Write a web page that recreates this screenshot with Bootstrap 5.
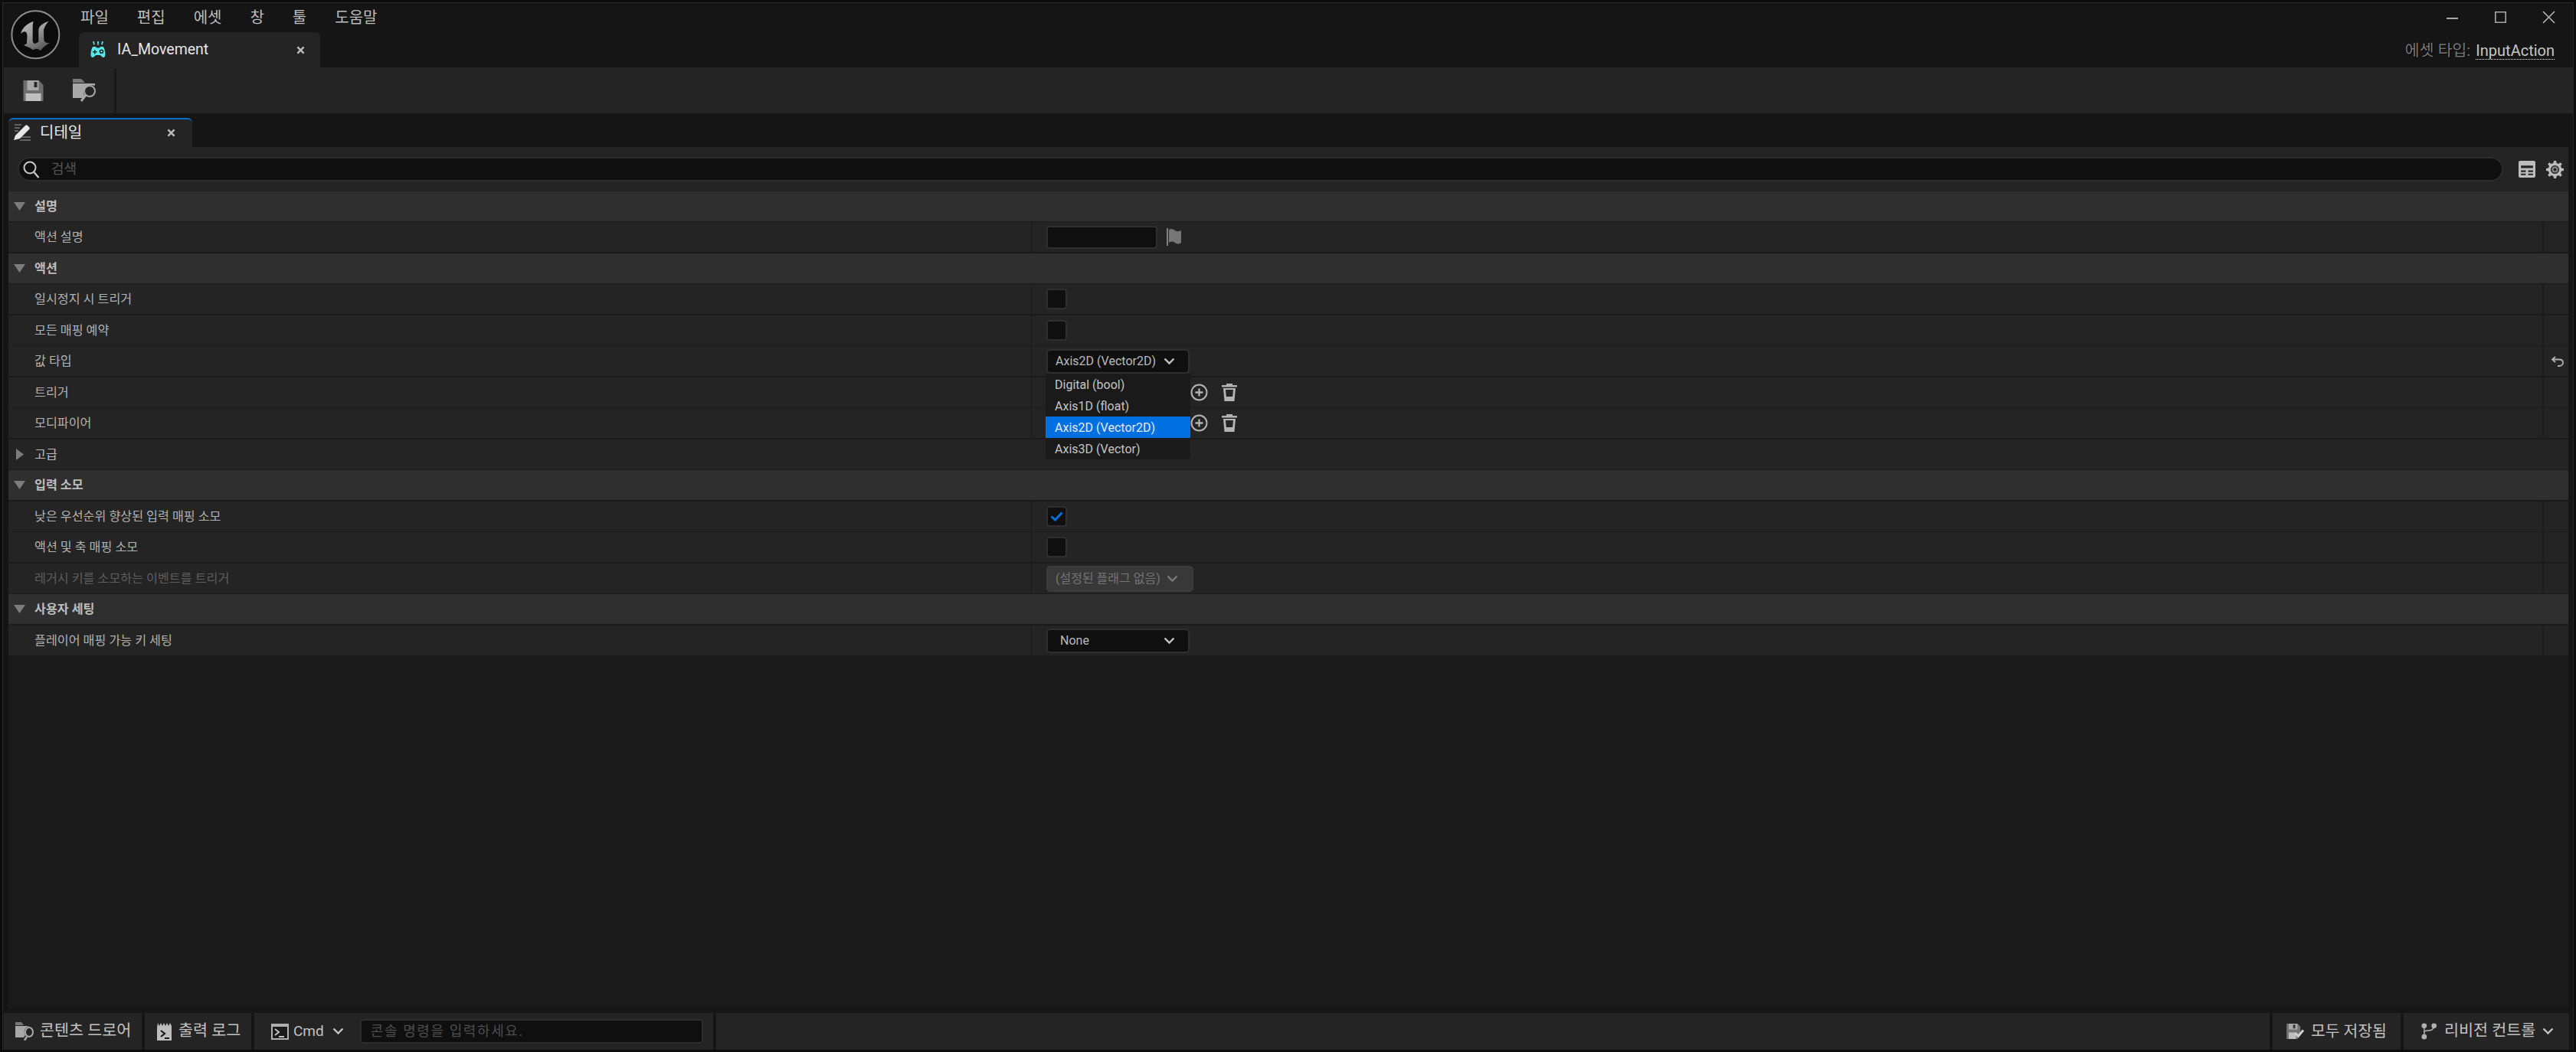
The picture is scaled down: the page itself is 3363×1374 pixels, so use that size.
<!DOCTYPE html>
<html lang="ko">
<head>
<meta charset="utf-8">
<title>IA_Movement</title>
<link href="https://cdn.jsdelivr.net/npm/bootstrap@5.3.0/dist/css/bootstrap.min.css" rel="stylesheet">
<style>
html,body{height:100%;margin:0;background:#0c0c0c;overflow:hidden}
body{font-family:Roboto,"Noto Sans CJK KR",sans-serif;font-size:14px;color:#c0c0c0}
.ue-win{height:1374px;width:3363px;display:flex;flex-direction:column;padding:3px 3px 3px 3px}
.ue-frame{flex:1 1 auto;display:flex;flex-direction:column;background:#151515;border:1px solid #2a2a2a;border-bottom:0;border-right-color:#242424;min-height:0}
.ue-title{height:84px;flex:none;position:relative}
.ue-logo{width:65px;height:65px;margin:9px 24px 0 10px;flex:none}
.ue-menu{height:38px;padding-left:2px}
.ue-menu span{font-size:20px;color:#bdbdbd;margin-right:37px;line-height:36px}
.ue-doc{width:315px;height:46px;background:#242424;border-radius:6px 6px 0 0;padding-left:15px;color:#e6e6e6;font-size:19.5px}
.ue-doctxt{margin-left:15px;width:234px}
.ue-wbtns{padding-top:10px;gap:47.5px;padding-right:23px}
.ue-asset{padding-right:24px;margin-top:20px;font-size:20px;color:#777;text-shadow:1px 1px 0 #000}
.ue-asset-k{font-size:20.500px}
.ue-asset b{font-weight:400;color:#c6c6c6;border-bottom:1px dotted #eee;line-height:22px;margin-left:7px;display:inline-block;text-shadow:none}
.ue-tool{height:60px;flex:none;background:#242424;margin-left:1px;padding-left:25px;position:relative}
.ue-folder{margin-left:38px}
.ue-sep{position:absolute;left:144px;top:2px;bottom:1px;width:3px;background:#181818}
.ue-strip{height:44px;flex:none;padding:6px 0 0 7px}
.ue-dtab{width:240px;height:38px;background:#242424;border-top:2px solid #0a6ec8;border-radius:6px 6px 0 0;padding:0 22px 2px 7px;color:#e8e8e8;font-size:20px}
.ue-dtxt{margin-left:11px}
.ue-panel{flex:1 1 auto;margin:0 6px 6px 7px;background:#1a1a1a;min-height:0;display:flex;flex-direction:column}
.ue-search{height:58px;flex:none;background:#242424;padding:13px 6px 0 12px}
.ue-sbox{flex:1 1 auto;height:32px;background:#0f0f0f;border:2px solid #2c2c2c;border-radius:16px;padding-left:5px;color:#555;font-size:18px}
.ue-sbox span{margin-left:15px;margin-bottom:2px}
.ue-ric{margin-left:20px;gap:14px;height:32px}
.ue-r{height:39px;flex:none;background:#242424;margin-bottom:1px;position:relative}
.ue-g2{margin-bottom:2px}
.ue-h{background:#2f2f2f}
.ue-h .ue-n{font-weight:700;color:#c8c8c8}
.ue-n{width:1336px;flex:none;height:100%;padding:1px 0 0 34px;border-right:1px solid #1a1a1a;color:#b2b2b2;font-size:16.2px;position:relative}
.ue-h .ue-n,.ue-adv .ue-n{border-right:0;color:#bdbdbd}
.ue-dis .ue-n{color:#5e5e5e}
.ue-v{flex:1 1 auto;height:100%;padding-left:19px;position:relative}
.ue-e{width:34px;flex:none;height:100%;border-left:2px solid #1c1c1c;position:relative}
.ue-arr{position:absolute;left:7px;top:14px}
.ue-arr2{position:absolute;left:10px;top:12px}
.ue-reset{position:absolute;left:9px;top:13px}
.ue-flag{margin-left:12px}
.ue-text{width:145px;height:30px;background:#0f0f0f;border:2px solid #2f2f2f;border-radius:4px}
.ue-check{width:27px;height:27px;background:#0f0f0f;border:2px solid #2f2f2f;border-radius:4px}
.ue-combo{width:187px;height:32px;background:#0f0f0f;border:2px solid #2f2f2f;border-radius:5px;padding:0 17px 0 10px;color:#bababa;font-size:16px}
.ue-combo.ue-none{padding-left:16px}
.ue-combo.ue-off{width:192px;height:34px;background:#383838;border-color:#3c3c3c;color:#757575;font-size:16px;padding-right:18px}
.dropdown-menu.ue-drop{position:absolute;left:18px;top:36px;width:189px;min-width:0;height:112px;margin:0;padding:0;background:#1a1a1a;border:0;border-radius:0 0 4px 4px;z-index:5;font-size:16px}
.ue-drop .dropdown-item{height:28px;line-height:29px;padding:0 0 0 12px;color:#c4c4c4}
.ue-drop .dropdown-item.active{background:#0070e0;color:#e8e8e8}
.ue-acts{position:absolute;left:207px;top:0;height:39px;gap:17px}
.ue-foot{height:48px;flex:none;margin:0 5px 0 1px;position:relative}
.ue-fs{height:48px;background:#242424;flex:none;color:#c2c2c2;font-size:20.7px}
.ue-s1{width:180px;padding-left:15px}
.ue-s2{width:139px;padding-left:16px}
.ue-s3{width:599px;padding-left:22px}
.ue-s4{flex:1 1 auto}
.ue-s5{width:167px;padding-left:18px;font-size:20.4px}
.ue-s6{width:216px;padding-left:23px}
.ue-m7{margin-left:7px}
.ue-m6{margin-left:6px}
.ue-m8{margin-left:8px}
.ue-m9{margin-left:9px}
.ue-m10{margin-left:10px}
.ue-m11{margin-left:11px}
.ue-cmd{font-size:19px}
.ue-in{width:448px;height:32px;background:#0f0f0f;border:2px solid #2c2c2c;border-radius:4px;margin-left:21px;padding:0 0 2px 12px;color:#4e4e4e;font-size:18px;letter-spacing:1.6px}
</style>
</head>
<body>
<div class="ue-win"><div class="ue-frame">

<div class="ue-title d-flex">
  <svg class="ue-logo" viewBox="42 40 193 195">
    <defs><linearGradient id="ug" x1="0" y1="0" x2="0.6" y2="1"><stop offset="0" stop-color="#bdbdbd"/><stop offset=".5" stop-color="#9a9a9a"/><stop offset="1" stop-color="#5a5a5a"/></linearGradient></defs>
    <circle cx="138" cy="137" r="93" fill="#0c0c0c" stroke="#8c8c8c" stroke-width="6"/>
    <path fill="url(#ug)" d="M130 84C108 92 86 108 80 134C90 122 100 122 104 132C108 145 103 160 104 172L92 178C105 184 118 188 128 197C138 190 150 190 158 200C163 190 178 178 196 168C184 172 172 168 171 155L170 118C174 104 182 92 190 84C170 90 152 100 150 118L150 165L137 172C131 172 127 166 127 160L127 118C127 104 127 94 130 84Z"/>
  </svg>
  <div class="d-flex flex-column flex-grow-1">
    <div class="ue-menu d-flex align-items-center"><span>파일</span><span>편집</span><span>에셋</span><span>창</span><span>툴</span><span>도움말</span></div>
    <div class="ue-doc d-flex align-items-center">
      <svg width="20" height="22" viewBox="0 0 20 22" fill="#57e6ea"><path d="M3 0l2 .3.8 4-1.500.3zM9 0h2l-.4 5h-1.200zM15 0l2 .3-1.300 4.300-1.500-.3z"/><path fill-rule="evenodd" d="M4 7h3l1 1.500h4L13 7h3c2 0 3 5 3.500 9 .3 3-1 5-2.500 5-2 0-3-3-4.500-3h-5C6 18 5 21 3 21c-1.500 0-3-2-2.500-5C1 12 2 7 4 7zm10.500 3.500a2.800 2.800 0 100 5.600 2.800 2.800 0 000-5.600zM5 11v2H3v1.500h2v2h1.500v-2h2V13h-2v-2z"/><circle cx="14.500" cy="13.300" r="1.200"/></svg>
      <span class="ue-doctxt">IA_Movement</span>
      <svg width="11" height="11" viewBox="0 0 12 12" stroke="#bdbdbd" stroke-width="2.600"><path d="M1.500 1.500l9 9M10.500 1.500l-9 9"/></svg>
    </div>
  </div>
  <div class="d-flex flex-column align-items-end">
    <div class="ue-wbtns d-flex align-items-center">
      <svg width="15" height="15" viewBox="0 0 15 15" stroke="#a8a8a8" stroke-width="2" fill="none"><path d="M0 9h15"/></svg>
      <svg width="15" height="15" viewBox="0 0 15 15" stroke="#a8a8a8" stroke-width="1.600" fill="none"><path d="M.8.800h13.400v13.400H.8z"/></svg>
      <svg width="17" height="17" viewBox="0 0 17 17" stroke="#b4b4b4" stroke-width="1.600" fill="none"><path d="M1 1l15 15M16 1L1 16"/></svg>
    </div>
    <div class="ue-asset d-flex align-items-center"><span class="ue-asset-k">에셋 타입:</span><b>InputAction</b></div>
  </div>
</div>

<div class="ue-tool d-flex align-items-center">
  <svg width="27" height="27" viewBox="0 0 26 27" fill="#a8a8a8"><path d="M0 0h20l6 6v21H0z" fill="#6e6e6e"/><path d="M5 0h15v13H5z"/><path d="M14 2h4v7h-4z" fill="#2a2a2a"/><path d="M3 17h20v10H3z" fill="#c0c0c0"/></svg>
  <svg class="ue-folder" width="30" height="30" viewBox="0 0 30 30" fill="#a8a8a8"><path d="M0 0h11l5 5H0z" fill="#7a7a7a"/><path d="M0 6h29v3c-9-3-17 3-14 13l-2 3H0z"/><circle cx="22" cy="16" r="7" fill="none" stroke="#a8a8a8" stroke-width="2"/><path d="M17 21l-6 8" stroke="#a8a8a8" stroke-width="3"/></svg>
  <div class="ue-sep"></div>
</div>

<div class="ue-strip">
  <div class="ue-dtab d-flex align-items-center">
    <svg width="23" height="22" viewBox="0 0 23 22"><path d="M1 1h9M1 5h7M1 9h5M10 17h12M8 21h14" stroke="#777" stroke-width="1.500"/><path d="M0 21l2-6L15 2c1-1 2-1 3 0l2 2c1 1 1 2 0 3L8 19z" fill="#e8e8e8"/></svg>
    <span class="ue-dtxt flex-grow-1">디테일</span>
    <svg width="11" height="11" viewBox="0 0 12 12" stroke="#bdbdbd" stroke-width="2.600"><path d="M1.500 1.500l9 9M10.500 1.500l-9 9"/></svg>
  </div>
</div>

<div class="ue-panel">
  <div class="ue-search d-flex">
    <div class="ue-sbox d-flex align-items-center">
      <svg width="22" height="23" viewBox="0 0 22 23" fill="none" stroke="#c8c8c8" stroke-width="2"><circle cx="9" cy="9" r="7.500"/><path d="M14.500 15l6 7" stroke-width="2.300"/></svg>
      <span>검색</span>
    </div>
    <div class="ue-ric d-flex align-items-center">
      <svg width="22" height="22" viewBox="0 0 21 21"><rect width="21" height="21" rx="2" fill="#bdbdbd"/><path d="M3 6h15v3H3zM3 12h6v2H3zM12 12h6v2h-6zM3 16h6v2H3zM12 16h6v2h-6z" fill="#242424"/></svg>
      <svg width="23" height="23" viewBox="0 0 23 23"><path fill="#bdbdbd" fill-rule="evenodd" d="M10 0h3l.6 3 2.600 1 2.500-1.800 2.100 2.100L19 6.800l1 2.600 3 .6v3l-3 .6-1 2.600 1.800 2.500-2.100 2.100-2.500-1.800-2.600 1-.6 3h-3l-.6-3-2.600-1-2.500 1.800-2.100-2.100L4 16.200l-1-2.600-3-.6v-3l3-.6 1-2.600L2.200 4.300l2.100-2.100L6.800 4l2.600-1zM11.500 6a5.500 5.500 0 100 11 5.500 5.500 0 000-11z"/><circle cx="11.500" cy="11.500" r="3" fill="none" stroke="#8a8a8a" stroke-width="2"/></svg>
    </div>
  </div>

  <div class="ue-r ue-h d-flex align-items-center"><div class="ue-n d-flex align-items-center"><svg class="ue-arr" width="15" height="11" viewBox="0 0 15 11" fill="#7c7c7c"><path d="M0 0h15L7.500 11z"/></svg>설명</div></div>
  <div class="ue-r ue-g2 d-flex align-items-center"><div class="ue-n d-flex align-items-center">액션 설명</div>
    <div class="ue-v d-flex align-items-center"><div class="ue-text"></div>
      <svg class="ue-flag" width="20" height="23" viewBox="0 0 20 23"><path d="M1 0v23" stroke="#a0a0a0" stroke-width="1.500"/><path d="M3 2c3-2 5-1 8 1s5 1 8 0v16c-3 2-5 2-8 0s-5-2-8 0z" fill="#767676"/></svg>
    </div><div class="ue-e"></div></div>

  <div class="ue-r ue-h d-flex align-items-center"><div class="ue-n d-flex align-items-center"><svg class="ue-arr" width="15" height="11" viewBox="0 0 15 11" fill="#7c7c7c"><path d="M0 0h15L7.500 11z"/></svg>액션</div></div>
  <div class="ue-r ue-g2 d-flex align-items-center"><div class="ue-n d-flex align-items-center">일시정지 시 트리거</div><div class="ue-v d-flex align-items-center"><div class="ue-check"></div></div><div class="ue-e"></div></div>
  <div class="ue-r d-flex align-items-center"><div class="ue-n d-flex align-items-center">모든 매핑 예약</div><div class="ue-v d-flex align-items-center"><div class="ue-check"></div></div><div class="ue-e"></div></div>
  <div class="ue-r ue-g2 d-flex align-items-center"><div class="ue-n d-flex align-items-center">값 타입</div>
    <div class="ue-v d-flex align-items-center">
      <div class="ue-combo d-flex align-items-center justify-content-between"><span>Axis2D (Vector2D)</span><svg width="15" height="10" viewBox="0 0 15 10" fill="none" stroke="#c4c4c4" stroke-width="2.400"><path d="M1.500 1.500l6 6 6-6"/></svg></div>
      <div class="dropdown-menu show ue-drop">
        <a class="dropdown-item" href="#">Digital (bool)</a>
        <a class="dropdown-item" href="#">Axis1D (float)</a>
        <a class="dropdown-item active" href="#">Axis2D (Vector2D)</a>
        <a class="dropdown-item" href="#">Axis3D (Vector)</a>
      </div>
    </div>
    <div class="ue-e"><svg class="ue-reset" width="18" height="14" viewBox="0 0 18 14" fill="none" stroke="#b0b0b0" stroke-width="1.800"><path d="M6 1L2 4.500 6 8M2 4.500h9c3 0 5 1.500 5 4S14 13 11 13H9"/></svg></div>
  </div>
  <div class="ue-r d-flex align-items-center"><div class="ue-n d-flex align-items-center">트리거</div>
    <div class="ue-v"><div class="ue-acts d-flex align-items-center">
      <svg width="23" height="23" viewBox="0 0 23 23" fill="none" stroke="#b4b4b4" stroke-width="2"><circle cx="11.500" cy="11.500" r="10"/><path d="M11.500 6.500v10M6.500 11.500h10" stroke-width="2.300"/></svg>
      <svg width="22" height="23" viewBox="0 0 22 23" fill="#b4b4b4"><path d="M7 0h8v2h6v2.500H1V2h6z"/><path fill-rule="evenodd" d="M3 6h16l-1.500 17h-13zm3 2l1 10.500 1 1h6l1-1L16 8z"/><path d="M5.500 17h11v6h-11z"/></svg>
    </div></div><div class="ue-e"></div></div>
  <div class="ue-r ue-g2 d-flex align-items-center"><div class="ue-n d-flex align-items-center">모디파이어</div>
    <div class="ue-v"><div class="ue-acts d-flex align-items-center">
      <svg width="23" height="23" viewBox="0 0 23 23" fill="none" stroke="#b4b4b4" stroke-width="2"><circle cx="11.500" cy="11.500" r="10"/><path d="M11.500 6.500v10M6.500 11.500h10" stroke-width="2.300"/></svg>
      <svg width="22" height="23" viewBox="0 0 22 23" fill="#b4b4b4"><path d="M7 0h8v2h6v2.500H1V2h6z"/><path fill-rule="evenodd" d="M3 6h16l-1.500 17h-13zm3 2l1 10.500 1 1h6l1-1L16 8z"/><path d="M5.500 17h11v6h-11z"/></svg>
    </div></div><div class="ue-e"></div></div>
  <div class="ue-r ue-adv d-flex align-items-center"><div class="ue-n d-flex align-items-center"><svg class="ue-arr2" width="10" height="15" viewBox="0 0 10 15" fill="#7c7c7c"><path d="M0 0l10 7.500L0 15z"/></svg>고급</div></div>

  <div class="ue-r ue-h ue-g2 d-flex align-items-center"><div class="ue-n d-flex align-items-center"><svg class="ue-arr" width="15" height="11" viewBox="0 0 15 11" fill="#7c7c7c"><path d="M0 0h15L7.500 11z"/></svg>입력 소모</div></div>
  <div class="ue-r d-flex align-items-center"><div class="ue-n d-flex align-items-center">낮은 우선순위 향상된 입력 매핑 소모</div><div class="ue-v d-flex align-items-center"><div class="ue-check d-flex align-items-center justify-content-center"><svg width="17" height="13" viewBox="0 0 17 13" fill="none" stroke="#0a70dc" stroke-width="3"><path d="M1.500 6.500l5 4.500L15.500 1.500"/></svg></div></div><div class="ue-e"></div></div>
  <div class="ue-r ue-g2 d-flex align-items-center"><div class="ue-n d-flex align-items-center">액션 및 축 매핑 소모</div><div class="ue-v d-flex align-items-center"><div class="ue-check"></div></div><div class="ue-e"></div></div>
  <div class="ue-r ue-dis d-flex align-items-center"><div class="ue-n d-flex align-items-center">레거시 키를 소모하는 이벤트를 트리거</div>
    <div class="ue-v d-flex align-items-center"><div class="ue-combo ue-off d-flex align-items-center justify-content-between"><span>(설정된 플래그 없음)</span><svg width="15" height="10" viewBox="0 0 15 10" fill="none" stroke="#7a7a7a" stroke-width="2.400"><path d="M1.500 1.500l6 6 6-6"/></svg></div></div><div class="ue-e"></div></div>

  <div class="ue-r ue-h ue-g2 d-flex align-items-center"><div class="ue-n d-flex align-items-center"><svg class="ue-arr" width="15" height="11" viewBox="0 0 15 11" fill="#7c7c7c"><path d="M0 0h15L7.500 11z"/></svg>사용자 세팅</div></div>
  <div class="ue-r d-flex align-items-center"><div class="ue-n d-flex align-items-center">플레이어 매핑 가능 키 세팅</div>
    <div class="ue-v d-flex align-items-center"><div class="ue-combo ue-none d-flex align-items-center justify-content-between"><span>None</span><svg width="15" height="10" viewBox="0 0 15 10" fill="none" stroke="#c4c4c4" stroke-width="2.400"><path d="M1.500 1.500l6 6 6-6"/></svg></div></div><div class="ue-e"></div></div>
</div>

<div class="ue-foot d-flex gap-1">
  <div class="ue-fs ue-s1 d-flex align-items-center">
    <svg width="25" height="24" viewBox="0 0 25 24" fill="#a8a8a8"><path d="M0 0h8l3 4H0z" fill="#787878"/><path d="M0 5h19c-6 1-9 6-6 12l-2 3H0z"/><ellipse cx="18" cy="13" rx="5" ry="6" fill="none" stroke="#a8a8a8" stroke-width="2"/><path d="M15 19l-3 5" stroke="#a8a8a8" stroke-width="2.500"/></svg>
    <span class="ue-m7">콘텐츠 드로어</span>
  </div>
  <div class="ue-fs ue-s2 d-flex align-items-center">
    <svg width="20" height="23" viewBox="0 0 20 23"><path d="M0 6l1-6 2 4 2-4 2 4 2-4 2 4 2-4 2 4 2-4 2 4v19H0z" fill="#bdbdbd"/><path d="M5 10l5 4-5 4M10 20h6" fill="none" stroke="#1a1a1a" stroke-width="2.200"/></svg>
    <span class="ue-m8">출력 로그</span>
  </div>
  <div class="ue-fs ue-s3 d-flex align-items-center">
    <svg width="23" height="21" viewBox="0 0 23 21"><rect x="1" y="1" width="21" height="19" fill="#1a1a1a" stroke="#b0b0b0" stroke-width="2"/><path d="M1 1h21v3H1z" fill="#b0b0b0"/><path d="M5 7l5 4-5 4M10 17h7" fill="none" stroke="#c0c0c0" stroke-width="2"/></svg>
    <span class="ue-m6 ue-cmd">Cmd</span>
    <svg class="ue-m11" width="15" height="10" viewBox="0 0 15 10" fill="none" stroke="#c4c4c4" stroke-width="2.400"><path d="M1.500 1.500l6 6 6-6"/></svg>
    <div class="ue-in d-flex align-items-center">콘솔 명령을 입력하세요.</div>
  </div>
  <div class="ue-fs ue-s4"></div>
  <div class="ue-fs ue-s5 d-flex align-items-center">
    <svg width="24" height="20" viewBox="0 0 25 21"><path d="M0 0h15l4 4v12l-4 5H0z" fill="#727272"/><path d="M3 0h12v8H3z" fill="#a8a8a8"/><path d="M9 1.500h3v5H9z" fill="#333"/><path d="M3 12h10v9H3z" fill="#bdbdbd"/><path d="M12 13l4 4 7-8" fill="none" stroke="#d0d0d0" stroke-width="3.200"/></svg>
    <span class="ue-m8">모두 저장됨</span>
  </div>
  <div class="ue-fs ue-s6 d-flex align-items-center">
    <svg width="20" height="22" viewBox="0 0 21 22" fill="#b0b0b0"><circle cx="4" cy="3.500" r="3.500"/><circle cx="4" cy="18.500" r="3.500"/><circle cx="17.500" cy="3.500" r="3.500"/><path d="M4 3v15M4 13c0-2 2-3 5-3 6 0 8-2 8.500-6" fill="none" stroke="#b0b0b0" stroke-width="1.500"/></svg>
    <span class="ue-m10">리비전 컨트롤</span>
    <svg class="ue-m9" width="15" height="10" viewBox="0 0 15 10" fill="none" stroke="#c4c4c4" stroke-width="2.400"><path d="M1.500 1.500l6 6 6-6"/></svg>
  </div>
</div>

</div></div>
<script src="https://cdn.jsdelivr.net/npm/bootstrap@5.3.0/dist/js/bootstrap.bundle.min.js"></script>
</body>
</html>
